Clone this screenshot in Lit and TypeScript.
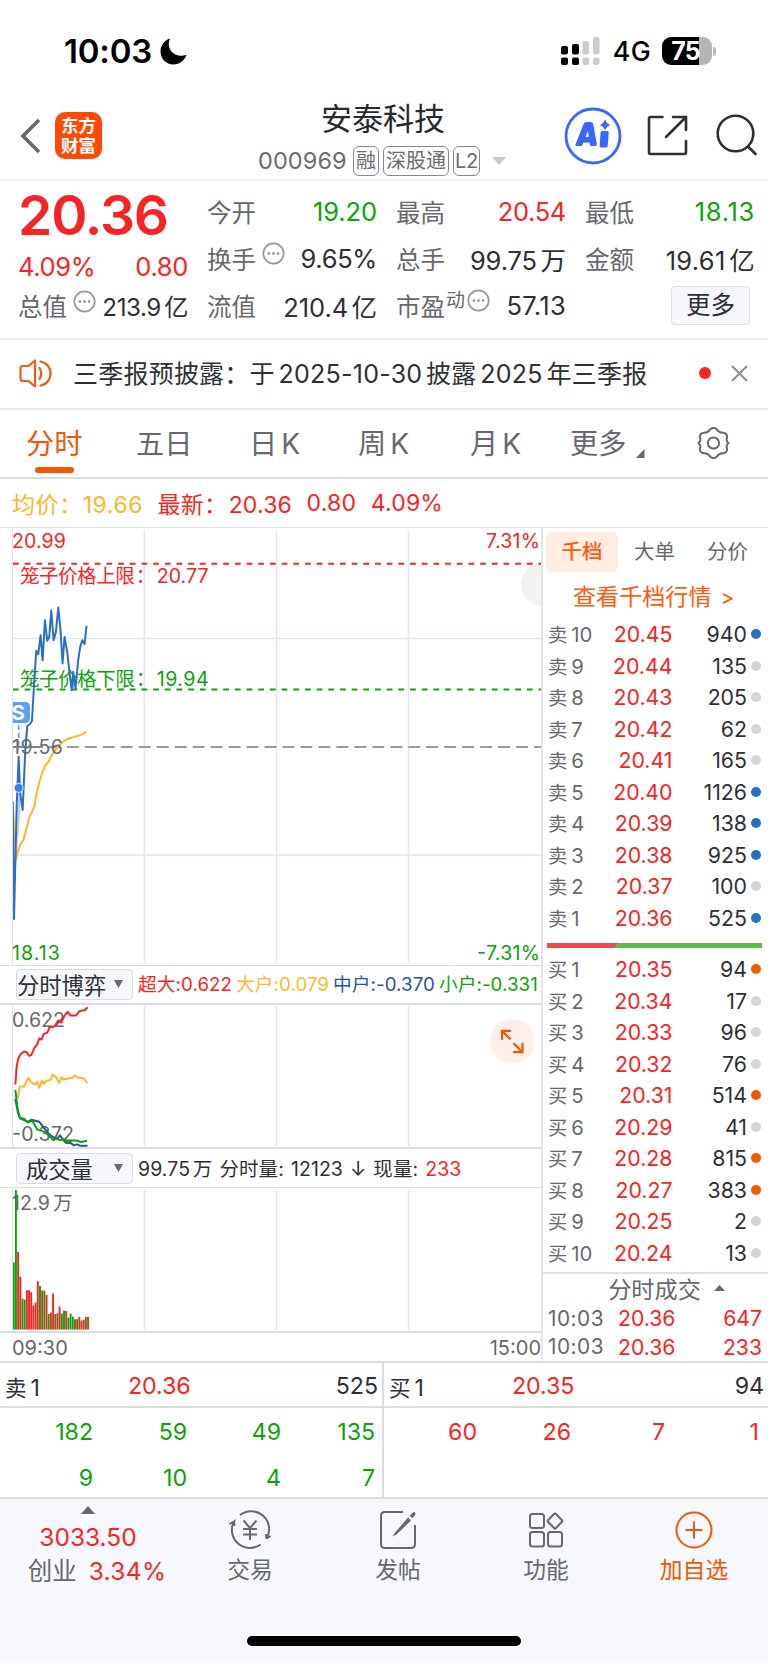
import { LitElement, html, css, svg } from "lit";
import { customElement } from "lit/decorators.js";
import { classMap } from "lit/directives/class-map.js";

const base = css`
  :host {
    display: block;
    box-sizing: border-box;
    font-family: Inter, "Noto Sans CJK SC", sans-serif;
    color: #2e3033;
    white-space: nowrap;
  }
  * {
    box-sizing: border-box;
  }
  svg {
    display: block;
    flex: none;
  }
  .up {
    color: #f82424;
  }
  .down {
    color: #0aa30a;
  }
  .u {
    margin-left: 0.14em;
  }
`;

@customElement("status-bar")
class StatusBar extends LitElement {
  static styles = [
    base,
    css`
      :host {
        height: 92px;
        padding: 10px 52px 0 64px;
        display: flex;
        align-items: center;
        color: #000;
      }
      .time {
        font-size: 33px;
        font-weight: 600;
        letter-spacing: -0.2px;
      }
      .moon {
        margin-left: 8px;
      }
      .net {
        margin: 0 11px 0 13px;
        font-size: 26.8px;
        font-weight: 500;
        letter-spacing: 0.3px;
      }
      .signal {
        margin-left: auto;
      }
      .battery {
        display: flex;
        align-items: center;
      }
      .cell {
        width: 50px;
        height: 28px;
        border-radius: 9px;
        background: linear-gradient(90deg, #000 75%, #b5b5b5 75%);
        color: #fff;
        font-size: 25px;
        font-weight: 700;
        line-height: 28px;
        padding-right: 3px;
        text-align: center;
        letter-spacing: -1px;
      }
      .tip {
        width: 3px;
        height: 9px;
        margin-left: 1px;
        border-radius: 0 4px 4px 0;
        background: #bbb;
      }
    `,
  ];
  render() {
    return html`
      <span class="time">10:03</span>
      <svg class="moon" width="27" height="27" viewBox="0 0 27 27">
        <path d="M10 .5C8.300 4 8.300 9 11 13C14.500 17.600 21 19 26.500 16.800C24.500 22.800 19.500 26.500 13.500 26.500C6 26.500 .5 20.800 .5 13.500C.5 7.500 4.300 2.300 10 .5Z" />
      </svg>
      <svg class="signal" width="39" height="28" viewBox="0 0 39 28">
        <rect x="0" y="9" width="7" height="8.500" rx="2" />
        <rect x="11" y="7" width="7" height="10.500" rx="2" />
        <rect x="0" y="20.500" width="7" height="7.500" rx="2" />
        <rect x="11" y="20.500" width="7" height="7.500" rx="2" />
        <g fill="#ccc">
          <rect x="21.500" y="4" width="6.500" height="13.500" rx="2" />
          <rect x="32" y="0" width="6.500" height="17.500" rx="2" />
          <rect x="21.500" y="20.500" width="6.500" height="7.500" rx="2" />
          <rect x="32" y="20.500" width="6.500" height="7.500" rx="2" />
        </g>
      </svg>
      <span class="net">4G</span>
      <span class="battery"><span class="cell">75</span><span class="tip"></span></span>
    `;
  }
}

@customElement("stock-header")
class StockHeader extends LitElement {
  static styles = [
    base,
    css`
      :host {
        height: 89px;
        padding: 0 11px 0 20px;
        display: grid;
        grid-template-columns: 238px 1fr 196px;
        border-bottom: 2px solid #efeff1;
      }
      .left {
        display: flex;
        align-items: center;
      }
      .logo {
        width: 47px;
        height: 47px;
        margin-left: 14px;
        padding-top: 4px;
        border-radius: 10px;
        background: #ff4a05;
        color: #fff;
        font-size: 17.5px;
        font-weight: 700;
        line-height: 19.5px;
        text-align: center;
      }
      .mid {
        padding-top: 9px;
      }
      .name {
        padding-left: 63px;
        font-size: 31px;
        line-height: 36px;
        color: #27292c;
      }
      .sub {
        display: flex;
        align-items: center;
        height: 31px;
        margin-top: 8px;
        color: #6a6c70;
      }
      .code {
        width: 95px;
        font-size: 23.5px;
        letter-spacing: 0.1px;
      }
      .tag {
        height: 30px;
        margin-right: 4px;
        padding: 0 2px;
        border: 1.500px solid #85878b;
        border-radius: 6px;
        font-size: 20px;
        line-height: 28px;
      }
      .l2 {
        padding: 0 1px;
        letter-spacing: -0.3px;
      }
      .caret {
        margin-left: 8px;
      }
      .right {
        display: flex;
        align-items: center;
        justify-content: flex-end;
      }
      .share {
        margin: 0 28px 0 25px;
      }
      .right > :last-child {
        margin-right: -1px;
      }
    `,
  ];
  render() {
    return html`
      <div class="left">
        <svg width="21" height="36" viewBox="0 0 21 36" fill="none" stroke="#66686c" stroke-width="3.600">
          <path d="M19 2L3 18L19 34" />
        </svg>
        <div class="logo">东方<br />财富</div>
      </div>
      <div class="mid">
        <div class="name">安泰科技</div>
        <div class="sub">
          <span class="code">000969</span>
          <span class="tag">融</span><span class="tag">深股通</span><span class="tag l2">L2</span>
          <svg class="caret" width="14" height="8" viewBox="0 0 14 8"><path d="M0 0H14L7 8Z" fill="#c8c9cc" /></svg>
        </div>
      </div>
      <div class="right">
        <svg width="58" height="58" viewBox="0 0 58 58" fill="#3a66ff">
          <circle cx="29" cy="29" r="27" fill="none" stroke="#3a66ff" stroke-width="2.800" />
          <path fill-rule="evenodd" d="M11.500 37.500L19.500 17Q20.400 15 22.500 15H26.500Q28.800 15 29.300 17.300L32.800 37Q33 39 31.500 39H27.500Q26 39 25.800 37.500L25.500 35.500H19.500L18.700 37.500Q18 39 16.500 39H12.500Q11 39 11.500 37.500ZM21.500 30H24.700L24 23.500Z" />
          <path d="M38 24H43.500Q44.800 24 44.700 25.500L43.700 39Q43.600 40.500 42 40.500H37Q35.500 40.500 35.600 39L36.600 25.500Q36.700 24 38 24Z" />
          <path d="M41 12.500L43 16L46 18L43 20L41 23L39 20L36 18L39 16Z" />
        </svg>
        <svg class="share" width="41" height="41" viewBox="0 0 41 41" fill="none" stroke="#2e3033" stroke-width="2.600" stroke-linecap="round">
          <path d="M15.500 2H3.500Q2 2 2 3.500V37.500Q2 39 3.500 39H37.500Q39 39 39 37.500V26M26 2H39V15M38.500 2.500L19 22" />
        </svg>
        <svg width="42" height="43" viewBox="0 0 42 43" fill="none" stroke="#2e3033" stroke-width="2.600" stroke-linecap="round">
          <circle cx="19.500" cy="19.500" r="17.800" />
          <path d="M32 32.500L39.500 40" />
        </svg>
      </div>
    `;
  }
}

const info = html`<svg class="info" width="23" height="23" viewBox="0 0 23 23">
  <circle cx="11.500" cy="11.500" r="10.200" fill="none" stroke="#97999d" stroke-width="1.700" />
  <g fill="#8b8d91"><circle cx="6.900" cy="11.500" r="1.300" /><circle cx="11.500" cy="11.500" r="1.300" /><circle cx="16.100" cy="11.500" r="1.300" /></g>
</svg>`;

@customElement("quote-panel")
class QuotePanel extends LitElement {
  static styles = [
    base,
    css`
      :host {
        height: 159px;
        padding: 0 13px 0 19px;
        display: grid;
        grid-template-columns: 169px 169px 169px 169px;
        column-gap: 20px;
        border-bottom: 2px solid #ebebee;
        font-size: 25.5px;
        letter-spacing: -0.35px;
      }
      .col {
        padding-top: 6.500px;
        display: grid;
        grid-template-rows: 47px 47px 47px;
      }
      .first {
        padding-top: 0;
        grid-template-rows: 68px 34px 45px;
      }
      .cell {
        display: flex;
        align-items: center;
      }
      .cell > :last-child {
        margin-left: auto;
      }
      .price {
        font-size: 55px;
        font-weight: 600;
        letter-spacing: -1.100px;
      }
      .cell > .price {
        margin-left: -1px;
      }
      .k {
        margin-left: -1px;
        font-size: 24.5px;
        letter-spacing: 0;
        color: #66686c;
      }
      .pct {
        margin-left: -1px;
      }
      .small {
        font-size: 24.2px;
        letter-spacing: -0.45px;
      }
      .loose {
        letter-spacing: 0.3px;
      }
      .looser {
        letter-spacing: 0.7px;
      }
      .snug {
        letter-spacing: -0.1px;
      }
      .info {
        margin: -9px 0 0 6px;
      }
      .dyn {
        margin: -14px -4px 0 1px;
        font-size: 19px;
        color: #66686c;
      }
      .more {
        width: 79px;
        height: 39px;
        margin-right: 5px;
        border: 1.500px solid #dcdfe7;
        border-radius: 4px;
        background: #f6f7fb;
        font-size: 24.5px;
        line-height: 37px;
        text-align: center;
        letter-spacing: 0;
      }
    `,
  ];
  render() {
    return html`
      <div class="col first">
        <div class="cell"><span class="price up">20.36</span></div>
        <div class="cell up"><span class="pct">4.09%</span><span>0.80</span></div>
        <div class="cell"><span class="k">总值</span>${info}<span class="small">213.9<span class="u">亿</span></span></div>
      </div>
      <div class="col">
        <div class="cell"><span class="k">今开</span><span class="down snug">19.20</span></div>
        <div class="cell"><span class="k">换手</span>${info}<span>9.65%</span></div>
        <div class="cell"><span class="k">流值</span><span class="snug">210.4<span class="u">亿</span></span></div>
      </div>
      <div class="col">
        <div class="cell"><span class="k">最高</span><span class="up">20.54</span></div>
        <div class="cell"><span class="k">总手</span><span class="snug">99.75<span class="u">万</span></span></div>
        <div class="cell"><span class="k">市盈</span><span class="dyn">动</span>${info}<span class="loose">57.13</span></div>
      </div>
      <div class="col">
        <div class="cell"><span class="k">最低</span><span class="down looser">18.13</span></div>
        <div class="cell"><span class="k">金额</span><span class="loose">19.61<span class="u">亿</span></span></div>
        <div class="cell"><span class="more">更多</span></div>
      </div>
    `;
  }
}

@customElement("news-line")
class NewsLine extends LitElement {
  static styles = [
    base,
    css`
      :host {
        height: 70px;
        padding: 0 20px 2px 19px;
        display: flex;
        align-items: center;
        border-bottom: 2px solid #eaebef;
      }
      .text {
        margin: -2px 0 0 20px;
        font-size: 25px;
        letter-spacing: 0.220px;
      }
      .n {
        margin: 0 0.150em;
        letter-spacing: 0.250px;
      }
      .dot {
        width: 12px;
        height: 12px;
        margin-left: auto;
        border-radius: 50%;
        background: #f82424;
      }
      .x {
        margin-left: 20px;
      }
    `,
  ];
  render() {
    return html`
      <svg width="34" height="29" viewBox="0 0 34 29" fill="none" stroke="#f05a14" stroke-width="2.200" stroke-linejoin="round">
        <path d="M16 1.500V27.500L9.500 22H4Q1.500 22 1.500 19.500V9.500Q1.500 7 4 7H9.500Z" />
        <path d="M20.500 9Q24 14.500 20.500 20M21.500 2.500C35 5 35 24 21.500 26.500" stroke-linecap="round" />
      </svg>
      <span class="text">三季报预披露：于<span class="n">2025-10-30</span>披露<span class="n">2025</span>年三季报</span>
      <span class="dot"></span>
      <svg class="x" width="17" height="17" viewBox="0 0 17 17" stroke="#8a8c90" stroke-width="1.900"><path d="M1 1L16 16M16 1L1 16" /></svg>
    `;
  }
}

@customElement("period-tabs")
class PeriodTabs extends LitElement {
  static styles = [
    base,
    css`
      :host {
        height: 69px;
        padding: 0 38px 0 26px;
        display: flex;
        border-bottom: 2px solid #dcdde4;
        font-size: 28.2px;
        line-height: 68px;
        color: #66686c;
      }
      .t {
        width: 110px;
      }
      .t.on {
        color: #f25505;
        display: flex;
        flex-direction: column;
      }
      .on::after {
        content: "";
        width: 39px;
        height: 6px;
        margin: -11px 0 0 9px;
        border-radius: 3px;
        background: #f25505;
      }
      .k {
        margin-left: 4px;
      }
      .d {
        width: 110px;
        padding-left: 3px;
      }
      .w {
        width: 111px;
        padding-left: 2px;
      }
      .m {
        width: 103px;
        padding-left: 3px;
      }
      .more {
        display: flex;
      }
      .more svg {
        margin: 39px 0 0 10px;
      }
      .gear {
        margin: 17px 0 0 auto;
      }
    `,
  ];
  render() {
    return html`
      <span class="t on">分时</span>
      <span class="t">五日</span>
      <span class="t d">日<span class="k">K</span></span>
      <span class="t w">周<span class="k">K</span></span>
      <span class="t m">月<span class="k">K</span></span>
      <span class="more">更多<svg width="9" height="9" viewBox="0 0 9 9"><path d="M8.500 0V9H0Z" fill="#66686c" /></svg></span>
      <svg class="gear" width="33" height="32" viewBox="0 0 33 32" fill="none" stroke="#66686c" stroke-width="2" stroke-linejoin="round">
        <path d="M13 2.500Q16.500 -.5 20 2.500Q22 6 26 5.800Q30 6 30.200 10.200Q28.500 13.500 31.500 16Q28.500 18.500 30.200 21.800Q30 26 26 26.200Q22 26 20 29.500Q16.500 32.500 13 29.500Q11 26 7 26.200Q3 26 2.800 21.800Q4.500 18.500 1.500 16Q4.500 13.500 2.800 10.200Q3 6 7 5.800Q11 6 13 2.500Z" />
        <circle cx="16.500" cy="16" r="5.600" />
      </svg>
    `;
  }
}

const pts = (list: number[][], dx: number, dy: number) =>
  list.map(([x, y]) => `${(x / 3 - dx).toFixed(2)},${(y / 3 - dy).toFixed(2)}`).join(" ");

/* Series are sampled in thirds of a pixel. */
const PRICE = [[38,845],[42,1198],[50,860],[56,710],[60,815],[68,870],[76,690],[82,618],[90,612],[96,603],[103,480],[109,392],[115,402],[122,345],[128,420],[135,300],[142,362],[148,350],[154,270],[161,360],[168,335],[175,262],[181,320],[188,430],[194,350],[202,395],[208,450],[215,510],[220,455],[227,505],[235,420],[241,380],[247,360],[254,372],[260,317]];
const AVG = [[38,845],[48,1020],[55,990],[62,972],[70,962],[78,932],[88,892],[96,876],[103,860],[110,820],[120,780],[128,755],[135,738],[148,722],[155,705],[165,692],[178,676],[192,663],[205,656],[225,650],[247,643],[260,635]];
const SUPER = [[46,404],[50,350],[55,325],[62,313],[73,305],[80,307],[88,318],[94,316],[103,295],[112,283],[118,266],[125,269],[131,253],[142,248],[150,230],[158,232],[165,228],[175,212],[184,218],[195,195],[204,186],[212,197],[228,197],[240,183],[256,180],[263,172]];
const LARGE = [[53,445],[60,410],[72,410],[85,384],[94,398],[105,404],[112,396],[118,414],[126,392],[131,402],[140,393],[153,390],[158,374],[170,384],[178,399],[185,383],[192,389],[205,386],[218,384],[224,377],[232,383],[250,385],[263,400]];
const MIDDLE = [[46,448],[54,490],[60,507],[84,517],[94,511],[118,517],[130,533],[148,555],[163,565],[172,568],[180,558],[197,580],[212,581],[222,588],[232,585],[240,589],[263,589]];
const SMALL = [[46,421],[53,480],[60,506],[72,508],[84,519],[97,514],[112,540],[130,546],[145,555],[158,571],[172,567],[180,572],[192,570],[203,579],[218,573],[232,574],[243,578],[262,574]];
const VOL: [number, string][] = [
  [937,"g"],[720,"g"],[905,"r"],[980,"r"],[1046,"g"],[1049,"g"],[1021,"r"],[1021,"r"],[1027,"r"],[1067,"r"],[1058,"r"],[994,"r"],[1008,"g"],[1022,"r"],[1022,"g"],[1035,"r"],[1092,"g"],[1088,"r"],[1031,"r"],[1092,"g"],[1090,"r"],[1070,"r"],[1091,"g"],[1082,"g"],[1083,"r"],[1103,"g"],[1091,"g"],[1100,"g"],[1108,"r"],[1108,"g"],[1101,"r"],[1112,"r"],[1109,"r"],[1101,"g"],[1101,"r"],
];

const grid = (y1: number, y2: number) =>
  [131.5, 264, 396.2].map((x) => svg`<path class="grid" d="M${x} ${y1}V${y2}" />`);

@customElement("trend-charts")
class TrendCharts extends LitElement {
  static styles = [
    base,
    css`
      :host {
        width: 541px;
        padding-left: 12px;
      }
      svg {
        font-size: 19.6px;
      }
      .frame {
        border-left: 1px solid #dfe0e6;
      }
      .grid {
        stroke: #e2e5ed;
        stroke-width: 1.5;
      }
      .line {
        fill: none;
        stroke-width: 2;
        stroke-linejoin: round;
      }
      .rt {
        fill: #f82424;
      }
      .gt {
        fill: #0aa30a;
      }
      .nt {
        fill: #66686c;
      }
      .bar {
        display: flex;
        align-items: center;
        margin-left: -12px;
        padding-left: 16px;
        border: solid #dcdde4;
        font-size: 19px;
      }
      .b1 {
        height: 40px;
        border-width: 1px 0 2px;
      }
      .b2 {
        height: 41px;
        border-width: 2px 0 1px;
      }
      .pick {
        width: 117px;
        height: 31px;
        display: flex;
        align-items: center;
        justify-content: space-between;
        padding: 0 9px 1px 0;
        border: 1px solid #d9dce4;
        border-radius: 4px;
        background: #f6f7fb;
        font-size: 22.3px;
      }
      .pick.ind {
        padding-left: 9px;
      }
      .vals {
        display: flex;
        align-items: baseline;
        padding: 1px 0 0 5px;
        gap: 4px;
        font-size: 18.7px;
        line-height: 30px;
        letter-spacing: 0.080px;
      }
      .vals.wide {
        gap: 7px;
        font-size: 19.5px;
      }
      .lg {
        color: #ffb52e;
      }
      .md {
        color: #2a529c;
      }
      .axis {
        display: flex;
        justify-content: space-between;
        height: 30px;
        border-top: 2px solid #dcdde4;
        font-size: 20px;
        line-height: 31px;
        color: #66686c;
        margin-left: -12px;
        padding-left: 12px;
      }
    `,
  ];
  render() {
    const arrow = html`<svg width="9" height="8" viewBox="0 0 9 8"><path d="M0 0H9L4.500 8Z" fill="#66686c" /></svg>`;
    return html`
      <svg class="frame" width="529" height="437" viewBox="0 0 529 437">
        ${grid(2, 435)}
        <path class="grid" d="M0 110.300H529M0 327.300H529" />
        <circle cx="531" cy="56" r="22" fill="#f2f2f3" />
        <path d="M0 35.300H529" stroke="#f82424" stroke-width="2" stroke-dasharray="5.800 5.900" />
        <path d="M0 161.300H529" stroke="#0aa30a" stroke-width="2" stroke-dasharray="5.800 5.900" />
        <path d="M0 219H529" stroke="#77797d" stroke-width="1.500" stroke-dasharray="12 6" />
        <text class="rt" x="-1" y="19.500" textLength="54">20.99</text>
        <text class="rt" x="528" y="19.500" text-anchor="end" textLength="54">7.31%</text>
        <text class="rt" x="7" y="55" textLength="115">笼子价格上限</text>
        <text class="rt" x="123" y="55">：</text>
        <text class="rt" x="144" y="55" textLength="52">20.77</text>
        <text class="gt" x="7" y="157.500" textLength="115">笼子价格下限</text>
        <text class="gt" x="123" y="157.500">：</text>
        <text class="gt" x="144" y="157.500" textLength="52">19.94</text>
        <text class="gt" x="-1" y="432" textLength="48">18.13</text>
        <text class="gt" x="528" y="432" text-anchor="end" textLength="63">-7.31%</text>
        <polyline class="line" stroke="#ffb52e" points=${pts(AVG, 13, 8)} />
        <path d="M3.500 330L4 300L5.700 230L8 268L6 300Z" fill="#2b70bf" opacity=".35" />
        <polyline class="line" stroke="#2b70bf" points=${pts(PRICE, 13, 8)} />
        <path d="M5.700 197V222" stroke="#5a9ff8" stroke-width="1.600" stroke-dasharray="5 3" />
        <text class="nt" x="-1" y="226" textLength="51">19.56</text>
        <path d="M0 219H27" stroke="#77797d" stroke-width="1.300" />
        <path d="M0 174H12Q17 174 17 179V190.500Q17 193.500 14 195H0Z" fill="#5a9ff8" />
        <text x="-1.500" y="192" font-weight="700" font-size="20.500" fill="#fff">S</text>
        <circle cx="5.700" cy="260" r="4.500" fill="#2f80f5" stroke="#fff" stroke-width=".8" />
      </svg>
      <div class="bar b1">
        <span class="pick">分时博弈${arrow}</span>
        <span class="vals"><span class="up">超大:0.622</span><span class="lg">大户:0.079</span><span class="md">中户:-0.370</span><span class="down">小户:-0.331</span></span>
      </div>
      <svg class="frame" width="529" height="142" viewBox="0 0 529 142">
        ${grid(1, 141)}
        <text class="nt" x="-1" y="21.500" textLength="53">0.622</text>
        <text class="nt" x="-1" y="136" textLength="62">-0.372</text>
        <polyline class="line" stroke="#ffb52e" points=${pts(LARGE, 13, 55.2)} />
        <polyline class="line" stroke="#2a529c" points=${pts(MIDDLE, 13, 55.5)} />
        <polyline class="line" stroke="#0aa30a" points=${pts(SMALL, 13, 55.5)} />
        <polyline class="line" stroke="#f82424" points=${pts(SUPER, 13, 55.2)} />
        <circle cx="500.200" cy="36.300" r="22.500" fill="#fdf0ea" />
        <path d="M498.500 34.300L490.500 26.300M490 34.800V25.800H499M501.500 38.300L510 46.800M510.500 37.800V47.100H501" fill="none" stroke="#f25505" stroke-width="2.200" />
      </svg>
      <div class="bar b2">
        <span class="pick ind">成交量${arrow}</span>
        <span class="vals wide"><span>99.75<span class="u">万</span></span><span>分时量:</span><span>12123</span><span>↓</span><span>现量:</span><span class="up">233</span></span>
      </div>
      <svg class="frame" width="529" height="143" viewBox="0 0 529 143">
        ${grid(2, 142)}
        <text class="nt" x="-1" y="22" textLength="38">12.9</text>
        <text class="nt" x="40" y="22">万</text>
        ${VOL.map(([top, c], i) => svg`<rect x=${(i * 2.19 - 0.2).toFixed(2)} y=${(top / 3 - 238).toFixed(2)} width="1.900" height=${(379.7 - top / 3).toFixed(2)} fill=${c === "g" ? "#0aa30a" : "#f82424"} />`)}
      </svg>
      <div class="axis"><span>09:30</span><span>15:00</span></div>
    `;
  }
}

const SELL: [number, string, string, boolean][] = [
  [10, "20.45", "940", true], [9, "20.44", "135", false], [8, "20.43", "205", false], [7, "20.42", "62", false], [6, "20.41", "165", false],
  [5, "20.40", "1126", true], [4, "20.39", "138", true], [3, "20.38", "925", true], [2, "20.37", "100", false], [1, "20.36", "525", true],
];
const BUY: [number, string, string, boolean][] = [
  [1, "20.35", "94", true], [2, "20.34", "17", false], [3, "20.33", "96", false], [4, "20.32", "76", false], [5, "20.31", "514", true],
  [6, "20.29", "41", false], [7, "20.28", "815", true], [8, "20.27", "383", true], [9, "20.25", "2", false], [10, "20.24", "13", false],
];

@customElement("order-book")
class OrderBook extends LitElement {
  static styles = [
    base,
    css`
      :host {
        width: 227px;
        padding-top: 4px;
        border-left: 2px solid #e4e5ea;
      }
      .tabs {
        display: grid;
        grid-template-columns: 72px 73px 73px;
        margin-left: 3px;
        height: 39px;
        font-size: 20.5px;
        line-height: 40px;
        text-align: center;
        color: #66686c;
      }
      .on {
        border-radius: 5px;
        background: #ffece3;
        color: #ff5a0a;
        font-weight: 500;
      }
      .link {
        height: 47.500px;
        padding: 4px 0 0 30px;
        font-size: 23.1px;
        line-height: 45px;
        color: #ff5a0a;
      }
      .gt {
        margin-left: 9px;
        font-size: 21px;
      }
      .row {
        display: grid;
        grid-template-columns: 56px 67.500px 74.500px 10px;
        align-items: center;
        height: 31.5px;
        padding-left: 6px;
        font-size: 21.3px;
        text-align: right;
      }
      .lab {
        text-align: left;
        font-size: 20.3px;
        color: #66686c;
      }
      .c {
        margin: 0 4px 0 -1px;
        font-size: 19.3px;
      }
      .dot {
        width: 10px;
        height: 10px;
        margin-left: 3.500px;
        border-radius: 50%;
        background: #d3d5dc;
      }
      .s {
        background: #2b70c0;
      }
      .b {
        background: #f05a05;
      }
      .ratio {
        margin: 9.250px 6px 5.500px 4px;
        height: 5px;
        background: linear-gradient(135deg, #f04b4b 50px, #5bbd45 51px);
      }
      .head {
        display: flex;
        align-items: center;
        justify-content: center;
        height: 31.500px;
        margin-top: 3.750px;
        padding: 0 0 2px 22px;
        border-top: 2px solid #dfe0e6;
        font-size: 23.200px;
        color: #66686c;
      }
      .head svg {
        margin-left: 13px;
      }
      .deal {
        display: grid;
        grid-template-columns: 70px 62px 1fr;
        padding: 1px 6px 0 5px;
        height: 28.500px;
        align-items: center;
        font-size: 21.2px;
      }
      .deal > :first-child {
        font-size: 20.800px;
        letter-spacing: 0.500px;
        color: #66686c;
      }
      .deal > :last-child {
        text-align: right;
      }
    `,
  ];
  row(side: string, [n, price, qty, big]: [number, string, string, boolean]) {
    return html`<div class="row">
      <span class="lab"><span class="c">${side}</span>${n}</span>
      <span class="up">${price}</span><span>${qty}</span>
      <span class=${classMap({ dot: true, s: big && side === "卖", b: big && side === "买" })}></span>
    </div>`;
  }
  render() {
    return html`
      <div class="tabs"><span class="on">千档</span><span>大单</span><span>分价</span></div>
      <div class="link">查看千档行情<span class="gt">&gt;</span></div>
      ${SELL.map((r) => this.row("卖", r))}
      <div class="ratio"></div>
      ${BUY.map((r) => this.row("买", r))}
      <div class="head">分时成交<svg width="11" height="6" viewBox="0 0 11 6"><path d="M0 6L5.500 0L11 6Z" fill="#66686c" /></svg></div>
      ${["647", "233"].map((q) => html`<div class="deal"><span>10:03</span><span class="up">20.36</span><span class="up">${q}</span></div>`)}
    `;
  }
}

@customElement("queue-panel")
class QueuePanel extends LitElement {
  static styles = [
    base,
    css`
      :host {
        display: grid;
        grid-template-columns: 382px 386px;
        height: 138px;
        overflow: hidden;
        border: solid #d9dce2;
        border-width: 2px 0;
        font-size: 23.2px;
        letter-spacing: -0.050px;
      }
      .half + .half {
        border-left: 2px solid #d9dce2;
      }
      .top {
        display: grid;
        grid-template-columns: 123px 1fr auto;
        align-items: center;
        height: 45px;
        padding: 3px 4px 0 5px;
        border-bottom: 2px solid #d9dce2;
      }
      .c {
        margin-right: 4px;
        font-size: 21.5px;
      }
      .nums {
        display: grid;
        grid-template-columns: repeat(4, 94px);
        grid-auto-rows: 46px;
        padding-top: 1px;
        line-height: 46px;
        text-align: right;
      }
      .nums span {
        padding-right: 1px;
      }
    `,
  ];
  half(label: string, price: string, qty: string, nums: number[], cls: string) {
    return html`<div class="half">
      <div class="top"><span><span class="c">${label}</span>1</span><span class="up">${price}</span><span>${qty}</span></div>
      <div class="nums ${cls}">${nums.map((n) => html`<span>${n}</span>`)}</div>
    </div>`;
  }
  render() {
    return html`${this.half("卖", "20.36", "525", [182, 59, 49, 135, 9, 10, 4, 7], "down")}${this.half("买", "20.35", "94", [60, 26, 7, 1], "up")}`;
  }
}

@customElement("bottom-nav")
class BottomNav extends LitElement {
  static styles = [
    base,
    css`
      :host {
        height: 164px;
        padding-top: 6px;
        background: #f7f8fb;
        color: #66686c;
      }
      .items {
        display: grid;
        grid-template-columns: 176px 148px 148px 148px 148px;
        height: 130px;
      }
      .index {
        display: flex;
        flex-direction: column;
        align-items: center;
        font-size: 24.5px;
        line-height: 34px;
      }
      .index svg {
        margin: 1px 0 6px 0;
      }
      .pct {
        margin-left: 12px;
        letter-spacing: 0.300px;
      }
      .second {
        padding-left: 18px;
      }
      .item {
        display: flex;
        flex-direction: column;
        align-items: center;
        padding-top: 4px;
        font-size: 22.8px;
        line-height: 34px;
      }
      .item svg {
        margin-bottom: 2px;
      }
      .add {
        color: #f25505;
      }
      .home {
        width: 274px;
        height: 10px;
        margin: 1px auto 0;
        border-radius: 5px;
        background: #000;
      }
    `,
  ];
  item(label: string, icon: unknown, add = false) {
    return html`<div class=${classMap({ item: true, add })}>
      <svg width="44" height="42" viewBox="0 0 44 42" fill="none" stroke="currentColor" stroke-width="2">${icon}</svg>${label}
    </div>`;
  }
  render() {
    return html`
      <div class="items">
        <div class="index">
          <svg width="14" height="8" viewBox="0 0 14 8"><path d="M0 8L7 0L14 8Z" fill="#66686c" /></svg>
          <span class="up">3033.50</span>
          <span class="second">创业<span class="pct up">3.34%</span></span>
        </div>
        ${this.item("交易", svg`<path d="M12 6A18 18 0 0 1 38.500 29.500L42.500 27M38.500 30L38 25M32.500 35.500A18 18 0 0 1 6 12.500L1.500 15M6 12L6.500 17" /><path d="M15.500 11.500L22 19L28.500 11.500M22 19V31M15 20H29M15 25.500H29" />`)}
        ${this.item("发帖", svg`<path d="M27 3H9Q5 3 5 7V35Q5 39 9 39H35Q39 39 39 35V16" /><path d="M19.500 23L32 8.500L35 11.500L20.500 25.500L16.500 27.500Z" fill="currentColor" stroke="none" /><path d="M33.800 6.800L36.500 3.800Q38 2.500 39 3.700Q40 5 39 6.300L36.300 9.200Z" fill="currentColor" stroke="none" />`)}
        ${this.item("功能", svg`<rect x="6" y="5" width="14" height="14" rx="2.500" /><rect x="6" y="23" width="14" height="14.500" rx="2.500" /><rect x="24" y="23" width="14" height="14.500" rx="2.500" /><path d="M30.200 4.800Q31 4 31.800 4.800L38 11.200Q38.800 12 38 12.800L31.800 19.200Q31 20 30.200 19.200L24 12.800Q23.200 12 24 11.200Z" />`)}
        ${this.item("加自选", svg`<circle cx="22" cy="21" r="17.500" /><path d="M22 12.500V29.500M13.500 21H30.500" />`, true)}
      </div>
      <div class="home"></div>
    `;
  }
}

@customElement("app-root")
class AppRoot extends LitElement {
  static styles = [
    base,
    css`
      :host {
        width: 768px;
        height: 1663px;
        overflow: hidden;
        background: #fff;
      }
      .latest {
        display: flex;
        align-items: center;
        height: 48px;
        padding: 0 0 0 12px;
        font-size: 23px;
      }
      .latest > span {
        margin-right: 14.500px;
        letter-spacing: 0.200px;
      }
      .latest .n {
        margin-left: 1.500px;
      }
      .latest .avg {
        color: #ffb52e;
        letter-spacing: 0.550px;
      }
      .main {
        display: flex;
        height: 834px;
        border-top: 1px solid #dfe0e6;
      }
    `,
  ];
  render() {
    return html`
      <status-bar></status-bar>
      <stock-header></stock-header>
      <quote-panel></quote-panel>
      <news-line></news-line>
      <period-tabs></period-tabs>
      <div class="latest">
        <span class="avg">均价：19.66</span><span class="up">最新：<span class="n">20.36</span></span><span class="up">0.80</span><span class="up">4.09%</span>
      </div>
      <div class="main"><trend-charts></trend-charts><order-book></order-book></div>
      <queue-panel></queue-panel>
      <bottom-nav></bottom-nav>
    `;
  }
}
